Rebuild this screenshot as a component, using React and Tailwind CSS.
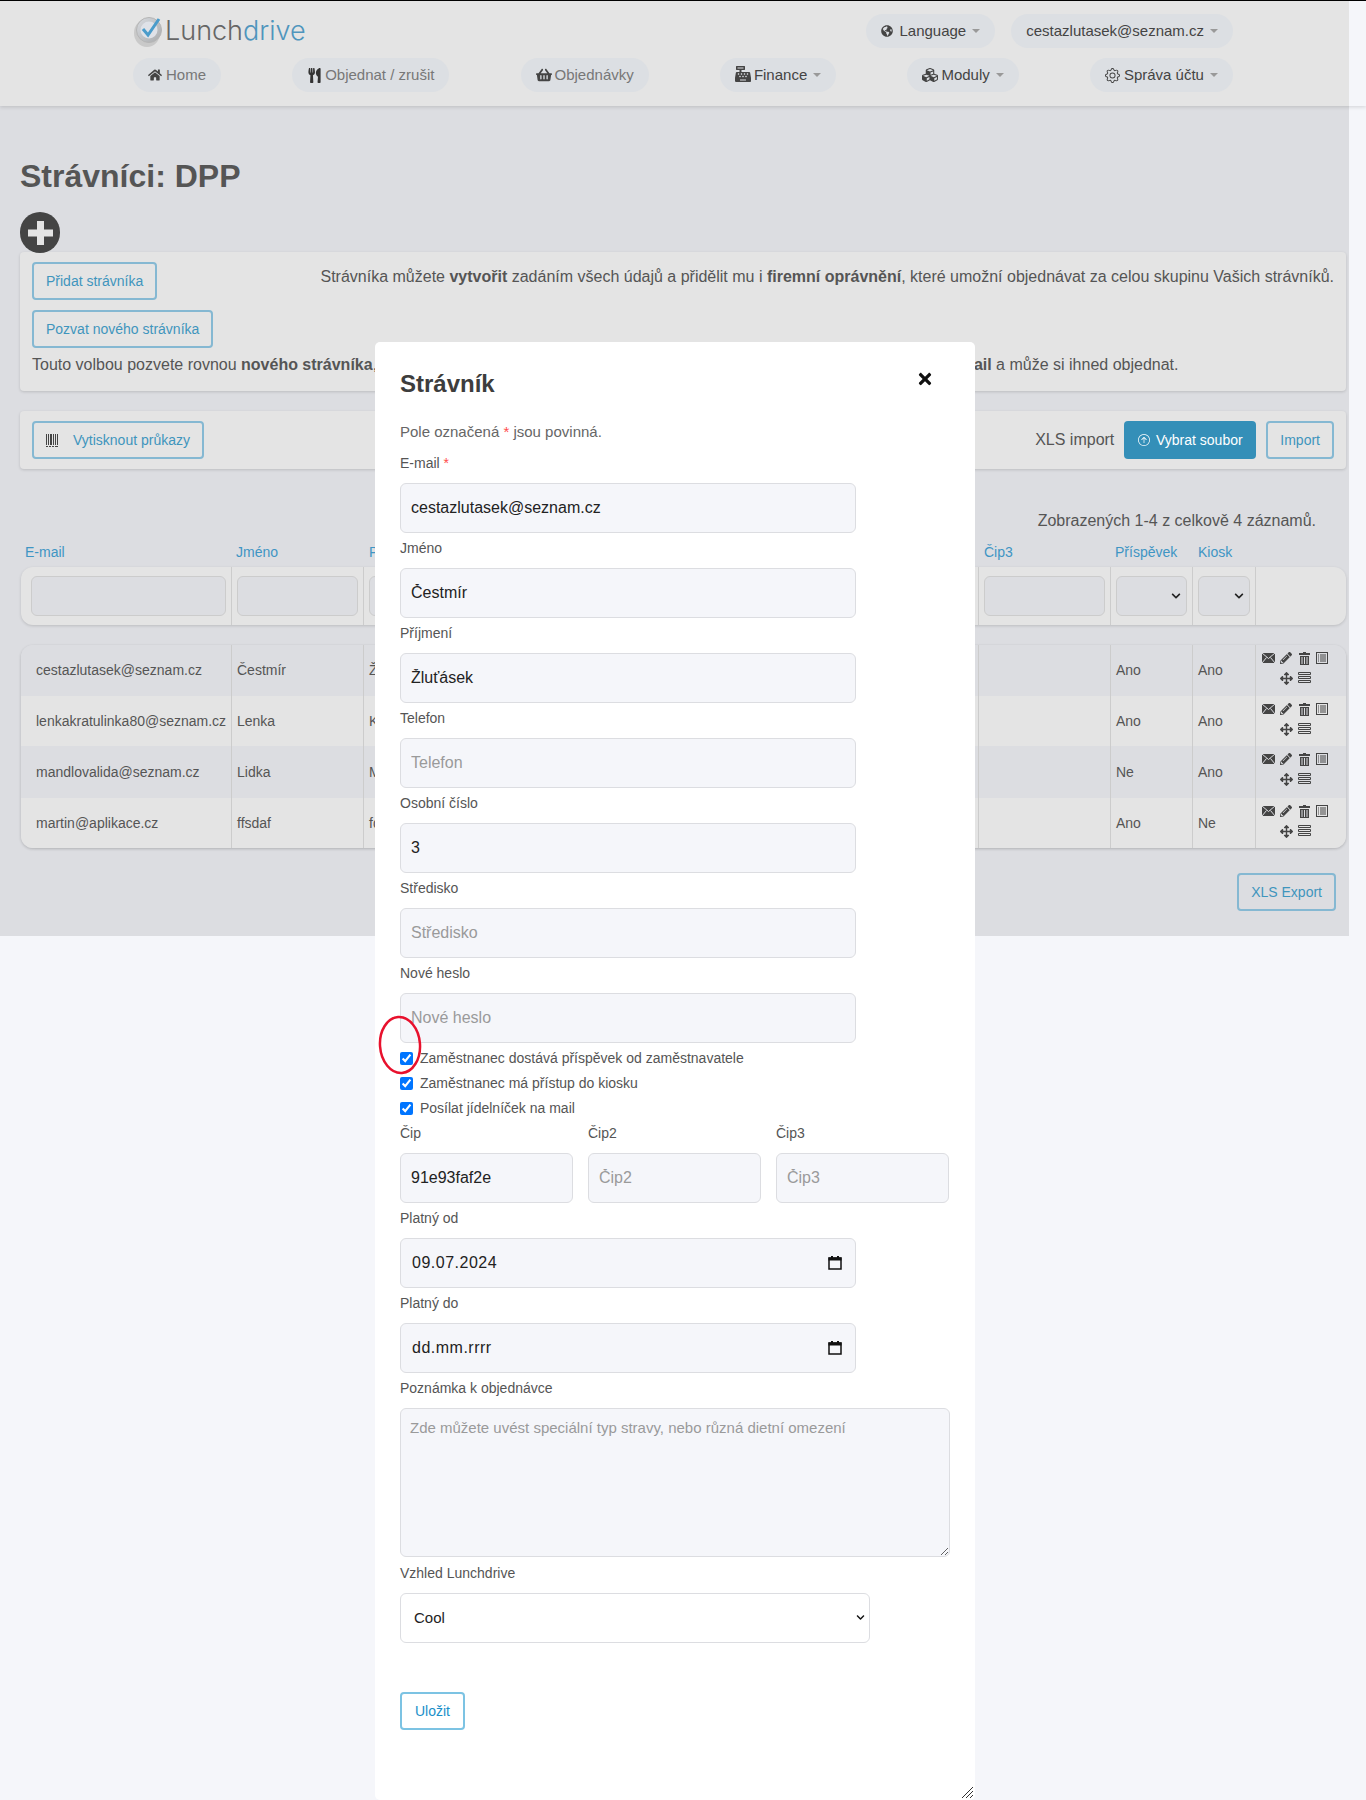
import React from 'react';
import {
  FaHome,
  FaUtensils,
  FaShoppingBasket,
  FaCashRegister,
  FaCubes,
  FaGlobeAmericas,
  FaTimes,
  FaPencilAlt,
  FaArrowsAlt,
  FaChevronDown,
} from 'react-icons/fa';
import { BsGear, BsArrowUpCircle } from 'react-icons/bs';

const COLS = 'grid grid-cols-[211px_132px_123px_123px_123px_123px_123px_132px_82px_63px_90px]';

const rows = [
  { email: 'cestazlutasek@seznam.cz', first: 'Čestmír', last: 'Žluťásek', personal: '3', chip: '91e93faf2e', allowance: 'Ano', kiosk: 'Ano', bg: 'bg-[#dcdde1]', h: 'h-[51px]' },
  { email: 'lenkakratulinka80@seznam.cz', first: 'Lenka', last: 'Kratulinka', personal: '', chip: '', allowance: 'Ano', kiosk: 'Ano', bg: 'bg-[#e4e4e4]', h: 'h-[50px]' },
  { email: 'mandlovalida@seznam.cz', first: 'Lidka', last: 'Mandlová', personal: '', chip: '', allowance: 'Ne', kiosk: 'Ano', bg: 'bg-[#dcdde1]', h: 'h-[52px]' },
  { email: 'martin@aplikace.cz', first: 'ffsdaf', last: 'fdsaf', personal: '', chip: '', allowance: 'Ano', kiosk: 'Ne', bg: 'bg-[#e4e4e4]', h: 'h-[50px]' },
];

const Caret = () => (
  <span className="ml-[6px] inline-block w-0 h-0 border-x-[4px] border-x-transparent border-t-[4px] border-t-[#999]" />
);

const Pill = ({ icon, label, muted, caret, className = '' }) => (
  <div
    className={`h-[34px] rounded-full bg-[#dcdfe3] flex items-center text-[15px] ${
      muted ? 'text-[#777]' : 'text-[#444]'
    } ${className}`}
  >
    {icon}
    {label}
    {caret && <Caret />}
  </div>
);

const OutlineButton = ({ children, className = '' }) => (
  <button className={`h-[38px] border-2 border-[#85b8d2] rounded-[4px] px-[12px] text-[14px] text-[#3f95bd] flex items-center shrink-0 ${className}`}>
    {children}
  </button>
);

const Logo = () => (
  <div className="flex items-center h-[36px] ml-[-1px]">
    <svg width="34" height="36" viewBox="0 0 34 36" className="shrink-0">
      <defs>
        <linearGradient id="disc" x1="0" y1="0" x2="1" y2="1">
          <stop offset="0" stopColor="#d8dbe0" />
          <stop offset="1" stopColor="#a9abad" />
        </linearGradient>
      </defs>
      <ellipse cx="15" cy="21" rx="13" ry="14" fill="#c9c9c9" />
      <circle cx="17" cy="18" r="12.5" fill="url(#disc)" stroke="#b5b5b5" />
      <circle cx="17" cy="18" r="8.5" fill="#dfe2e8" />
      <path d="M11 17l5 6 11-16" fill="none" stroke="#4a9ccb" strokeWidth="3" />
    </svg>
    <span className="text-[27px] leading-none -ml-[1px] font-light text-[#666] font-['Inter',sans-serif]">
      Lunch<span className="text-[#4f95bd]">drive</span>
    </span>
  </div>
);

const MailIcon = () => (
  <svg width="13" height="10" viewBox="0 0 13 10">
    <rect width="13" height="10" fill="#444" />
    <path d="M0 0l6.5 5.5L13 0M0 10l4.5-5.5M13 10L8.500 4.500" fill="none" stroke="#dcdde1" strokeWidth="1" />
  </svg>
);

const TrashIcon = () => (
  <svg width="11" height="13" viewBox="0 0 11 13">
    <path d="M4 0h3v1h4v2H0V1h4z" fill="#444" />
    <path d="M1 4h9v9H1z" fill="#444" />
    <path d="M3 5v7M5.500 5v7M8 5v7" stroke="#dcdde1" strokeWidth="1" />
  </svg>
);

const ListIcon = () => (
  <svg width="12" height="12" viewBox="0 0 12 12">
    <rect x="0.500" y="0.500" width="11" height="11" fill="none" stroke="#444" />
    <path d="M2 3h1M4 3h6M2 5h1M4 5h6M2 7h1M4 7h6M2 9h1M4 9h6" stroke="#444" strokeWidth="1" />
  </svg>
);

const TasksIcon = () => (
  <svg width="13" height="12" viewBox="0 0 13 12">
    <path d="M0.500 0.500h12v2h-12zM0.500 4.500h12v2h-12zM0.500 8.500h12v2h-12z" fill="none" stroke="#444" />
  </svg>
);

const BarcodeIcon = () => (
  <svg width="12" height="13" viewBox="0 0 12 13">
    <path d="M0 0h1v11H0zM2 0h1v11H2zM4 0h2v11H4zM7 0h1v11H7zM9 0h1v11H9zM11 0h1v11h-1zM0 12h2v1H0zM3 12h2v1H3zM6 12h2v1H6zM9 12h3v1H9z" fill="#444" />
  </svg>
);

const Actions = () => (
  <div className="pt-[3px] w-[72px] ml-[3px] self-start flex flex-wrap content-start justify-center text-[#444]">
    <span className="w-[18px] h-[20px] flex items-center justify-center"><MailIcon /></span>
    <span className="w-[18px] h-[20px] flex items-center justify-center"><FaPencilAlt size={12} /></span>
    <span className="w-[18px] h-[20px] flex items-center justify-center"><TrashIcon /></span>
    <span className="w-[18px] h-[20px] flex items-center justify-center"><ListIcon /></span>
    <span className="w-[18px] h-[20px] flex items-center justify-center"><FaArrowsAlt size={13} /></span>
    <span className="w-[18px] h-[20px] flex items-center justify-center"><TasksIcon /></span>
  </div>
);

const FilterInput = ({ className = 'px-[5px]' }) => (
  <div className={`border-r border-[#ccc] h-[58px] flex items-center justify-center ${className}`}>
    <div className="w-full h-[40px] rounded-[6px] border border-[#ccc] bg-[#dcdde1]" />
  </div>
);

const FilterSelect = () => (
  <div className="border-r border-[#ccc] h-[58px] flex items-center justify-center px-[5px]">
    <div className="w-full h-[40px] rounded-[6px] border border-[#ccc] bg-[#dcdde1] flex items-center justify-end pr-[5px] text-[#222]">
      <FaChevronDown size={10} />
    </div>
  </div>
);

const Cell = ({ children, className = '' }) => (
  <div className={`border-r border-[#ccc] flex items-center text-[14px] text-[#555] whitespace-nowrap overflow-hidden ${className}`}>
    {children}
  </div>
);

const inputClass =
  'w-full h-[50px] rounded-[6px] border border-[#dcdde1] bg-[#f5f6fa] px-[10px] text-[16px] text-[#222] placeholder:text-[#9a9a9a] outline-none';

const Label = ({ children }) => (
  <div className="h-[20px] leading-[20px] text-[14px] text-[#555] mb-[10px]">{children}</div>
);

const Field = ({ label, value, placeholder }) => (
  <div className="w-[456px] mb-[5px]">
    <Label>{label}</Label>
    <input className={inputClass} readOnly value={value || ''} placeholder={placeholder} />
  </div>
);

const DateField = ({ label, value }) => (
  <div className="w-[456px] mb-[5px]">
    <Label>{label}</Label>
    <div className="relative">
      <input className={`${inputClass} pl-[11px] tracking-[0.5px]`} readOnly value={value} />
      <svg width="14" height="14" viewBox="0 0 14 14" className="absolute right-[14px] top-[18px]">
        <path d="M1 2h12v11H1z" fill="none" stroke="#111" strokeWidth="1.500" />
        <path d="M0.500 1.500h13v3h-13zM3 0h2v2H3zM9 0h2v2H9z" fill="#111" />
      </svg>
    </div>
  </div>
);

const Check = ({ label }) => (
  <label className="h-[20px] mb-[5px] flex items-center text-[14px] text-[#555]">
    <input type="checkbox" readOnly checked className="w-[13px] h-[13px] mr-[7px] accent-[#0075ff]" />
    {label}
  </label>
);

const Modal = () => (
  <div className="absolute left-[375px] top-[342px] w-[600px] h-[1458px] bg-white rounded-[5px] pt-[27px] pl-[25px]">
    <h2 className="text-[24px] leading-[30px] font-bold text-[#3d3d3d]">Strávník</h2>
    <FaTimes size={18} className="absolute left-[541px] top-[28px] text-[#111]" />
    <p className="mt-[23px] mb-[11px] h-[20px] leading-[20px] text-[15px] text-[#666]">
      Pole označená <span className="text-[#ff4d4d]">*</span> jsou povinná.
    </p>
    <Field label={<>E-mail <span className="text-[#ff4d4d]">*</span></>} value="cestazlutasek@seznam.cz" />
    <Field label="Jméno" value="Čestmír" />
    <Field label="Příjmení" value="Žluťásek" />
    <Field label="Telefon" placeholder="Telefon" />
    <Field label="Osobní číslo" value="3" />
    <Field label="Středisko" placeholder="Středisko" />
    <Field label="Nové heslo" placeholder="Nové heslo" />
    <Check label="Zaměstnanec dostává příspěvek od zaměstnavatele" />
    <Check label="Zaměstnanec má přístup do kiosku" />
    <Check label="Posílat jídelníček na mail" />
    <div className="flex gap-[15px] w-[549px] mb-[5px]">
      <div className="flex-1">
        <Label>Čip</Label>
        <input className={inputClass} readOnly value="91e93faf2e" />
      </div>
      <div className="flex-1">
        <Label>Čip2</Label>
        <input className={inputClass} readOnly placeholder="Čip2" />
      </div>
      <div className="flex-1">
        <Label>Čip3</Label>
        <input className={inputClass} readOnly placeholder="Čip3" />
      </div>
    </div>
    <DateField label="Platný od" value="09.07.2024" />
    <DateField label="Platný do" value="dd.mm.rrrr" />
    <Label>Poznámka k objednávce</Label>
    <textarea
      readOnly
      placeholder="Zde můžete uvést speciální typ stravy, nebo různá dietní omezení"
      className="block w-[550px] h-[149px] rounded-[6px] border border-[#dcdde1] bg-[#f5f6fa] px-[9px] py-[9px] text-[15px] leading-[20px] placeholder:text-[#9a9a9a] outline-none mb-[6px]"
    />
    <Label>Vzhled Lunchdrive</Label>
    <div className="relative w-[470px]">
      <select className="w-full h-[50px] appearance-none rounded-[6px] border border-[#dcdde1] bg-white pl-[13px] text-[15px] text-[#222] outline-none">
        <option>Cool</option>
      </select>
      <FaChevronDown size={9} className="absolute right-[5px] top-[20px] text-[#111]" />
    </div>
    <button className="mt-[49px] w-[65px] h-[38px] border-2 border-[#7cc3e3] rounded-[4px] text-[14px] text-[#1b8fc9]">
      Uložit
    </button>
    {/* resize grip */}
    <svg width="12" height="12" viewBox="0 0 12 12" className="absolute right-[2px] bottom-[2px]">
      <path d="M1 12L12 1M5 12l7-7M9 12l3-3" stroke="#333" strokeWidth="1" />
    </svg>
    {/* hand drawn marker around the first checkbox */}
    <svg width="44" height="60" viewBox="0 0 44 60" className="absolute left-[3px] top-[673px]">
      <ellipse cx="22" cy="30" rx="20" ry="28" fill="none" stroke="#e8112d" strokeWidth="2.500" transform="rotate(-4 22 30)" />
    </svg>
  </div>
);

const App = () => (
  <div className="relative min-h-[1800px] bg-[#f5f6fa] font-['Liberation_Sans',Arial,sans-serif] overflow-hidden">
    <div className="w-[1349px] h-[936px] bg-[#dcdde1]">
      <header className="relative h-[106px] w-[1366px] shadow-[0_1px_4px_rgba(0,0,0,0.15)] bg-[#f5f6fa] border-t border-black">
        <div className="w-[1349px] h-full bg-[#e4e4e4] px-[133px] pr-[116px]">
          <div className="flex justify-between h-[44px] pt-[13px]">
            <div className="-mt-[2px]"><Logo /></div>
            <div className="flex gap-4">
              <Pill
                icon={<FaGlobeAmericas size={12} className="mr-[6px]" />}
                label="Language"
                caret
                className="px-[15px]"
              />
              <Pill label="cestazlutasek@seznam.cz" caret className="px-[15px]" />
            </div>
          </div>
          <nav className="flex justify-between mt-[13px]">
            <Pill icon={<FaHome size={14} className="mr-[4px] text-[#444]" />} label="Home" muted className="px-[15px]" />
            <Pill icon={<FaUtensils size={15} className="mr-[3px] text-[#333]" />} label="Objednat / zrušit" muted className="px-[15px]" />
            <Pill icon={<FaShoppingBasket size={16} className="mr-[3px] text-[#444]" />} label="Objednávky" muted className="px-[15px]" />
            <Pill icon={<FaCashRegister size={16} className="mr-[3px] -mt-[3px]" />} label="Finance" caret className="px-[15px]" />
            <Pill icon={<FaCubes size={16} className="mr-[3px]" />} label="Moduly" caret className="px-[15px]" />
            <Pill icon={<BsGear size={15} className="mr-[4px]" />} label="Správa účtu" caret className="px-[15px]" />
          </nav>
        </div>
      </header>

      <main className="pl-5 pr-[3px] pt-[50px] flex flex-col">
        <h1 className="text-[32px] leading-[40px] font-bold text-[#555]">Strávníci: DPP</h1>
        <div className="relative z-10 mt-[16px] w-[40px] h-[41px] rounded-full bg-[#444] flex items-center justify-center">
          <svg width="25" height="24" viewBox="0 0 25 24">
            <path d="M9 0h7v8.500h9v7h-9V24H9v-8.500H0v-7h9z" fill="#e4e4e4" />
          </svg>
        </div>

        <section className="-mt-[1px] bg-[#e4e4e4] rounded-[4px] shadow-[0_1px_3px_rgba(0,0,0,0.15)] pt-[10px] pb-[16px] px-3 text-[16px] text-[#555]">
          <div className="flex justify-between">
            <OutlineButton>Přidat strávníka</OutlineButton>
            <p className="leading-[20px] mt-[5px]">
              Strávníka můžete <b>vytvořit</b> zadáním všech údajů a přidělit mu i <b>firemní oprávnění</b>, které umožní objednávat za celou skupinu Vašich strávníků.
            </p>
          </div>
          <OutlineButton className="mt-[10px]">Pozvat nového strávníka</OutlineButton>
          <p className="leading-[20px] mt-[7px] whitespace-nowrap">
            Touto volbou pozvete rovnou <b>nového strávníka</b>, kterému stačí zadat pouze jméno a kontaktní údaj. Pozvánka mu přijde na jeho <b>e-mail</b> a může si ihned objednat.
          </p>
        </section>

        <section className="mt-[20px] bg-[#e4e4e4] rounded-[4px] shadow-[0_1px_3px_rgba(0,0,0,0.15)] py-[10px] px-3 flex items-center justify-between">
          <OutlineButton>
            <BarcodeIcon />
            <span className="ml-[15px]">Vytisknout průkazy</span>
          </OutlineButton>
          <div className="flex items-center">
            <span className="text-[16px] text-[#555] mr-[10px]">XLS import</span>
            <button className="h-[38px] w-[132px] rounded-[4px] bg-[#348fb8] text-white text-[14px] flex items-center justify-center">
              <BsArrowUpCircle size={12} className="mr-[6px]" />
              Vybrat soubor
            </button>
            <OutlineButton className="ml-[10px]">Import</OutlineButton>
          </div>
        </section>

        <p className="mt-[40px] pr-[30px] text-right text-[16px] leading-[24px] text-[#555]">
          Zobrazených 1-4 z celkově 4 záznamů.
        </p>

        <div className={`${COLS} mt-[9px] ml-px h-[20px] text-[14px] leading-[20px] text-[#3f95c4]`}>
          <span className="pl-[4px]">E-mail</span>
          <span className="pl-[4px]">Jméno</span>
          <span className="pl-[5px]">Příjmení</span>
          <span className="pl-[5px]">Os. číslo</span>
          <span className="pl-[5px]">Středisko</span>
          <span className="pl-[5px]">Čip</span>
          <span className="pl-[5px]">Čip2</span>
          <span className="pl-[5px]">Čip3</span>
          <span className="pl-[4px]">Příspěvek</span>
          <span className="pl-[5px]">Kiosk</span>
          <span />
        </div>

        <div className={`${COLS} mt-[5px] ml-px h-[58px] bg-[#e4e4e4] rounded-[12px] shadow-[0_1px_3px_rgba(0,0,0,0.15)]`}>
          <FilterInput className="pl-[10px] pr-[5px]" />
          <FilterInput />
          <FilterInput />
          <FilterInput />
          <FilterInput />
          <FilterInput />
          <FilterInput />
          <FilterInput />
          <FilterSelect />
          <FilterSelect />
          <div />
        </div>

        <div className="mt-[20px] ml-px rounded-[12px] overflow-hidden shadow-[0_1px_3px_rgba(0,0,0,0.2)]">
          {rows.map((row) => (
            <div key={row.email} className={`${COLS} ${row.h} ${row.bg}`}>
              <Cell className="pl-[15px]">{row.email}</Cell>
              <Cell className="pl-[5px]">{row.first}</Cell>
              <Cell className="pl-[5px]">{row.last}</Cell>
              <Cell className="pl-[5px]">{row.personal}</Cell>
              <Cell />
              <Cell className="pl-[5px]">{row.chip}</Cell>
              <Cell />
              <Cell />
              <Cell className="pl-[5px]">{row.allowance}</Cell>
              <Cell className="pl-[5px]">{row.kiosk}</Cell>
              <Actions />
            </div>
          ))}
        </div>

        <OutlineButton className="mt-[25px] mr-[10px] self-end">XLS Export</OutlineButton>
      </main>
    </div>
    <Modal />
  </div>
);

export default App;
